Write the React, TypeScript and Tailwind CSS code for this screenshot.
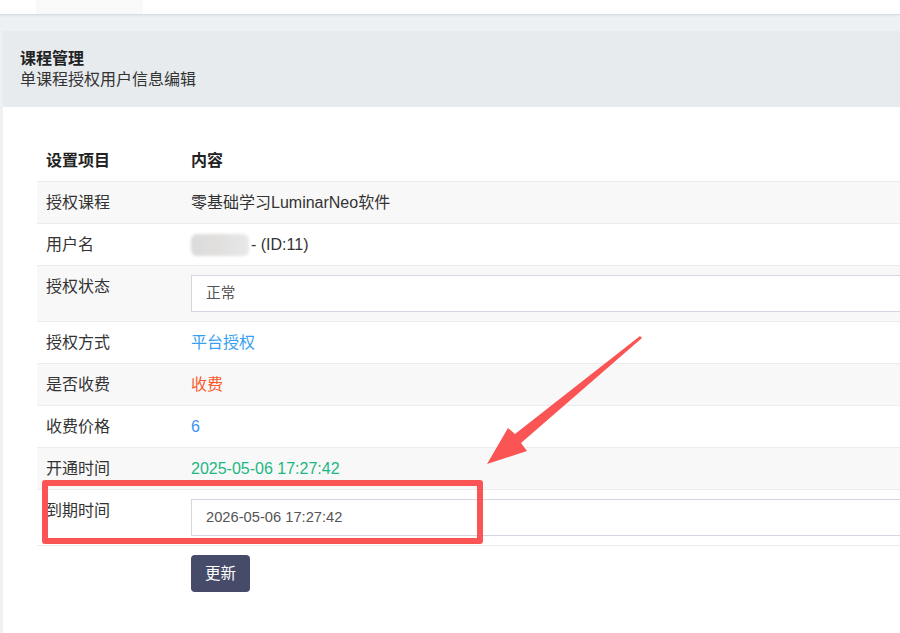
import React from "react";

type Row = {
  label: string;
  content: React.ReactNode;
};

const inputBox =
  "-my-[3px] h-[37px] w-[760px] border border-[#d3d8e0] bg-white pl-[14px] text-[14.7px] leading-[35px] text-[#555]";

function Username() {
  return (
    <div className="flex h-[17px] items-center">
      <span className="mr-[2px] h-[22px] w-[58px] shrink-0 rounded-[6px] bg-gradient-to-r from-[#dadbde] via-[#e2e0de] to-[#e8e8ea] blur-[1.5px]" />
      <span>- (ID:11)</span>
    </div>
  );
}

const rows: Row[] = [
  { label: "授权课程", content: "零基础学习LuminarNeo软件" },
  { label: "用户名", content: <Username /> },
  { label: "授权状态", content: <div className={inputBox}>正常</div> },
  { label: "授权方式", content: <span className="text-[#38a0f2]">平台授权</span> },
  { label: "是否收费", content: <span className="text-[#fa5a2c]">收费</span> },
  { label: "收费价格", content: <span className="text-[#3d93f5]">6</span> },
  { label: "开通时间", content: <span className="text-[#1bb783]">2025-05-06 17:27:42</span> },
  { label: "到期时间", content: <div className={inputBox}>2026-05-06 17:27:42</div> },
];

function Arrow() {
  return (
    <svg
      className="pointer-events-none absolute left-0 top-0"
      width="900"
      height="633"
      viewBox="0 0 900 633"
    >
      <polygon
        points="487,464 508,428 515,434 640,336 642,338 521,443 527,451"
        fill="#fa5454"
      />
    </svg>
  );
}

export default function App() {
  return (
    <div
      className="relative h-[633px] w-[900px] overflow-hidden bg-[#edf1f4] text-[16px] text-[#333]"
      style={{ fontFamily: '"Liberation Sans", "Noto Sans CJK SC", sans-serif' }}
    >
      {/* top tab bar */}
      <div className="h-[15px] border-b border-[#d6dce3] bg-white shadow-[0_1px_2px_rgba(0,0,0,0.05)]">
        <div className="ml-[36px] h-full w-[107px] bg-[#f9f9f9]" />
      </div>

      <div className="ml-[3px] mt-[16px]">
        {/* card header */}
        <div className="bg-[#e7ebee] px-[17px] py-[17px] leading-[21px]">
          <div className="font-bold text-[#222]">课程管理</div>
          <div className="text-[#333]">单课程授权用户信息编辑</div>
        </div>

        {/* card body */}
        <div className="h-[600px] bg-white pl-[34px] pt-[33px]">
          <table className="w-[900px] table-fixed border-collapse">
            <colgroup>
              <col className="w-[146px]" />
              <col />
            </colgroup>
            <thead>
              <tr>
                <th className="px-[9px] py-3 text-left align-top font-bold leading-[17px] text-[#222]">
                  设置项目
                </th>
                <th className="px-[8px] py-3 text-left align-top font-bold leading-[17px] text-[#222]">
                  内容
                </th>
              </tr>
            </thead>
            <tbody>
              {rows.map((row, i) => (
                <tr
                  key={row.label}
                  className={`border-t border-[#ececec] ${i % 2 === 0 ? "bg-[#f8f8f8]" : "bg-white"}`}
                >
                  <td className="px-[9px] py-3 align-top leading-[17px]">{row.label}</td>
                  <td className="whitespace-nowrap px-[8px] py-3 align-top leading-[17px]">
                    {row.content}
                  </td>
                </tr>
              ))}
              <tr className="border-t border-[#ececec]">
                <td />
                <td className="px-[8px] pt-[9px]">
                  <button className="h-[37px] w-[59px] rounded-[4px] bg-[#464b69] text-[15.5px] text-white">
                    更新
                  </button>
                </td>
              </tr>
            </tbody>
          </table>
        </div>
      </div>

      {/* annotation */}
      <div className="pointer-events-none absolute left-[42px] top-[480px] h-[64px] w-[441px] rounded-[3px] border-[6px] border-[#fa5454]" />
      <Arrow />
    </div>
  );
}
